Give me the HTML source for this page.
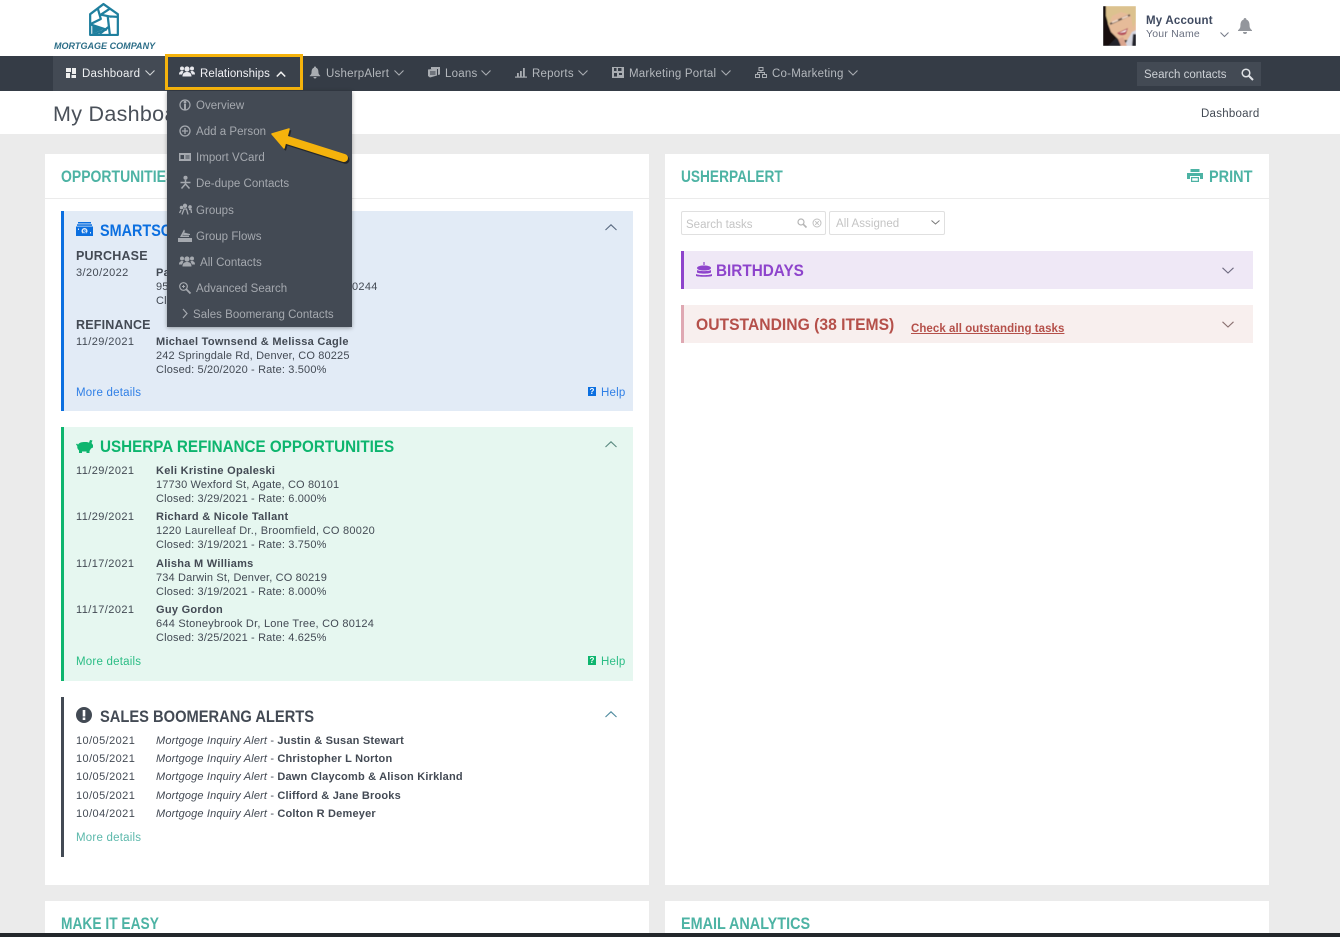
<!DOCTYPE html>
<html><head><meta charset="utf-8"><title>My Dashboard</title>
<style>
html,body{margin:0;padding:0;width:1340px;height:937px;overflow:hidden;background:#ebebeb;font-family:"Liberation Sans",sans-serif;font-size:11.5px;color:#434a54}
.a{position:absolute}
.t{position:absolute;white-space:nowrap;line-height:14px;letter-spacing:.22px}
.s{font-size:11px;letter-spacing:.15px}
.d{font-size:11px;letter-spacing:.42px}
.b,.t b{font-weight:bold;font-size:11px;letter-spacing:.28px}
.t.s b{letter-spacing:.2px}
.l{font-size:12.5px;font-weight:bold;letter-spacing:.2px}
.h{font-weight:bold;font-size:17px;line-height:20px;letter-spacing:0;transform-origin:0 50%}
.n{color:#b4b8bd;font-size:11.5px}
.m{color:#a5a9af;font-size:11.5px;letter-spacing:.03px}
svg{position:absolute;overflow:visible}
</style></head><body>
<div class="a" style="left:0;top:0;width:1340px;height:56px;background:#fff"></div>
<svg style="left:88px;top:3px" width="32" height="33" viewBox="0 0 28 31" fill="none" stroke="#1f7f9e" stroke-width="2.100" stroke-linejoin="round"><path d="M13.500 1L27 10.500V30H1V10.500Z"/><path d="M8 4.500L11 15L1 20M20 5L11 11L21 13M27 13L17.500 12.500L19.500 30M1 20L16 25L3 30M19 22L10 29"/><path d="M3 21L13 25L3 29Z" fill="#1f7f9e" stroke="none"/></svg>
<div class="t" style="left:54px;top:39px;font-size:9px;font-weight:bold;font-style:italic;color:#2b6d87;letter-spacing:.03px">MORTGAGE COMPANY</div>

<svg style="left:1103px;top:6px" width="33" height="40" viewBox="0 0 33 40"><defs><filter id="bl" x="-5%" y="-5%" width="110%" height="110%"><feGaussianBlur stdDeviation=".6"/></filter><clipPath id="ph"><rect width="33" height="40"/></clipPath></defs><g clip-path="url(#ph)"><rect width="33" height="40" fill="#fff"/><g filter="url(#bl)"><rect x="0" y="0" width="33" height="40" fill="#14110f"/><path d="M3 0H33V24L27 34H16L8 26L5 18Z" fill="#e6bb99"/><path d="M3 0H33V14L30 22L28 9L18 6L9 10L6 20L3 10Z" fill="#dcc28f"/><path d="M7 18L27 9" stroke="#5d5048" stroke-width="1.800"/><path d="M9 16.500L15 14M19 12.500L25 10" stroke="#f0d8c8" stroke-width="1.500"/><path d="M14 27L25 22L23 28Q18 31 14 27Z" fill="#b5505c"/><path d="M16 27L24 23.500L22 26Z" fill="#fff"/><path d="M5 40L13 32L20 40Z" fill="#20242c"/><path d="M21 40L29 26L33 24V40Z" fill="#d5d6e0"/><path d="M15 33L20 31L24 40H18Z" fill="#dba68f"/><path d="M30 28H33V40H29Z" fill="#20242c"/></g></g></svg>
<div class="t b" style="left:1146px;top:14px;font-size:11.500px;color:#3f4a60;letter-spacing:.2px">My Account</div>
<div class="t" style="left:1146px;top:27px;font-size:10.500px;color:#6a7080;letter-spacing:.2px">Your Name</div>
<svg style="left:1220px;top:32px" width="9" height="6" fill="none" stroke="#767b88"><path d="M.5 .5L4.500 4.500L8.500 .5"/></svg>
<svg style="left:1237px;top:18px" width="16" height="16" viewBox="0 0 16 16" fill="#93969c"><path d="M8 0a1.400 1.400 0 0 1 1.400 1.600C12 2.400 12.600 5 12.600 8c0 2 1 3 2.400 4.300V13H1v-.7C2.400 11 3.400 10 3.400 8c0-3 .6-5.600 3.200-6.400A1.400 1.400 0 0 1 8 0zM6 14h4a2 2 0 0 1-4 0z"/></svg>

<div class="a" style="left:0;top:56px;width:1340px;height:35px;background:#353c46"></div>
<div class="a" style="left:53px;top:56px;width:114px;height:35px;background:#434a54"></div>
<svg style="left:66px;top:68px" width="10" height="10" fill="#eee"><rect width="5" height="4"/><rect x="6" width="4" height="6"/><rect y="5" width="4" height="5"/><rect x="5.500" y="7" width="4.500" height="3"/></svg>
<div class="t" style="left:82px;top:67px;color:#eef0f2">Dashboard</div>
<svg style="left:145px;top:70px" width="10" height="6" fill="none" stroke="#d0d3d6" stroke-width="1.100"><path d="M.5 .5L5 5L9.500 .5"/></svg>

<div class="a" style="left:165px;top:54px;width:132px;height:30px;border:3px solid #f5b30c;background:#3a414b"></div>
<svg style="left:179px;top:66px" width="16" height="11" viewBox="0 0 16 11" fill="#e8e8ec"><circle cx="8" cy="3" r="2.600"/><circle cx="3" cy="2.500" r="2"/><circle cx="13" cy="2.500" r="2"/><path d="M3.500 10.500C3.500 7 5.500 6 8 6s4.500 1 4.500 4.500zM0 8.500C0 6 1.500 5 3 5s1.500.5 1.500.5L3 8.500zM16 8.500C16 6 14.500 5 13 5s-1.500.5-1.500.5L13 8.500z"/></svg>
<div class="t" style="left:200px;top:67px;color:#f2f2f6;letter-spacing:.07px">Relationships</div>
<svg style="left:276px;top:71px" width="10" height="7" fill="none" stroke="#f2f2f2" stroke-width="1.500"><path d="M.8 5.500L5 1.200L9.200 5.500"/></svg>

<svg style="left:309px;top:66px" width="12" height="13" viewBox="0 0 16 16" fill="#a9adb2"><path d="M8 0a1.400 1.400 0 0 1 1.400 1.600C12 2.400 12.600 5 12.600 8c0 2 1 3 2.400 4.300V13H1v-.7C2.400 11 3.400 10 3.400 8c0-3 .6-5.600 3.200-6.400A1.400 1.400 0 0 1 8 0zM6 14h4a2 2 0 0 1-4 0z"/></svg>
<div class="t n" style="left:326px;top:67px">UsherpAlert</div>
<svg style="left:394px;top:70px" width="10" height="6" fill="none" stroke="#a9adb2" stroke-width="1.100"><path d="M.5 .5L5 5L9.500 .5"/></svg>
<svg style="left:428px;top:67px" width="12" height="11" viewBox="0 0 12 11" fill="#a9adb2"><path d="M3 0H12V7.500L10 8V2H3z"/><path d="M0 2.500L9 1.500V8.500L2 10.500L0 9zM2 4.500V5.500H7.500V4.500zM2 6.500V7.500H7.500V6.500z" fill-rule="evenodd"/></svg>
<div class="t n" style="left:445px;top:67px">Loans</div>
<svg style="left:481px;top:70px" width="10" height="6" fill="none" stroke="#a9adb2" stroke-width="1.100"><path d="M.5 .5L5 5L9.500 .5"/></svg>
<svg style="left:515px;top:67px" width="12" height="11" fill="#a9adb2"><rect y="9.500" width="12" height="1.200"/><rect x="2" y="6" width="1.800" height="3.500"/><rect x="5" y="4" width="1.800" height="5.500"/><rect x="8" y="1" width="1.800" height="8.500"/></svg>
<div class="t n" style="left:532px;top:67px">Reports</div>
<svg style="left:578px;top:70px" width="10" height="6" fill="none" stroke="#a9adb2" stroke-width="1.100"><path d="M.5 .5L5 5L9.500 .5"/></svg>
<svg style="left:612px;top:67px" width="12" height="11" viewBox="0 0 12 11"><rect width="12" height="11" fill="#a9adb2"/><rect x="2" y="1" width="2.500" height="3" fill="#353c46"/><rect x="6" y="1" width="3.500" height="3" fill="#353c46"/><rect x="2" y="6" width="3" height="3.500" fill="#353c46"/><rect x="7" y="6" width="3" height="2" fill="#353c46"/></svg>
<div class="t n" style="left:629px;top:67px">Marketing Portal</div>
<svg style="left:721px;top:70px" width="10" height="6" fill="none" stroke="#a9adb2" stroke-width="1.100"><path d="M.5 .5L5 5L9.500 .5"/></svg>
<svg style="left:755px;top:67px" width="12" height="11" fill="none" stroke="#a9adb2"><rect x="4" y=".5" width="4" height="3"/><rect x=".5" y="7.500" width="4" height="3"/><rect x="7.500" y="7.500" width="4" height="3"/><path d="M6 3.500V5.500M2.500 7.500V5.500H9.500V7.500"/></svg>
<div class="t n" style="left:772px;top:67px">Co-Marketing</div>
<svg style="left:848px;top:70px" width="10" height="6" fill="none" stroke="#a9adb2" stroke-width="1.100"><path d="M.5 .5L5 5L9.500 .5"/></svg>

<div class="a" style="left:1137px;top:62px;width:124px;height:24px;background:#434a54"></div>
<div class="t" style="left:1144px;top:68px;color:#cdd1d6;letter-spacing:0">Search contacts</div>
<svg style="left:1241px;top:68px" width="13" height="13" fill="none" stroke="#dfe2e5" stroke-width="1.500"><circle cx="5" cy="5" r="3.800"/><path d="M8 8L12 12" stroke-width="2"/></svg>

<div class="a" style="left:0;top:91px;width:1340px;height:43px;background:#fff"></div>
<div class="t" style="left:53px;top:101px;font-size:21.500px;line-height:26px;color:#4a5059;letter-spacing:.3px">My Dashboard</div>
<div class="t" style="left:1201px;top:107px;color:#434a54;letter-spacing:.25px">Dashboard</div>

<!-- cards -->
<div class="a" style="left:45px;top:154px;width:604px;height:731px;background:#fff"></div>
<div class="a" style="left:665px;top:154px;width:604px;height:731px;background:#fff"></div>
<div class="a" style="left:45px;top:198px;width:604px;height:1px;background:#ebebeb"></div>
<div class="a" style="left:665px;top:198px;width:604px;height:1px;background:#ebebeb"></div>
<div class="t h" style="left:61px;top:167px;color:#4db3a4;transform:scaleX(.823)">OPPORTUNITIES</div>
<div class="t h" style="left:681px;top:167px;color:#4db3a4;transform:scaleX(.806)">USHERPALERT</div>
<svg style="left:1187px;top:169px" width="16" height="13" viewBox="0 0 16 13" fill="#4db3a4"><rect x="3.500" width="9" height="3"/><path d="M0 4H16V10H13V7H3V10H0z"/><path d="M4 8H12V13H4zM5.200 9.200V11.800H10.800V9.200z" fill-rule="evenodd"/></svg>
<div class="t h" style="left:1209px;top:167px;color:#4db3a4;transform:scaleX(.852)">PRINT</div>

<!-- blue panel -->
<div class="a" style="left:61px;top:211px;width:569px;height:200px;background:#e2ebf6;border-left:3px solid #0b6fe0"></div>
<svg style="left:76px;top:222px" width="17" height="14" viewBox="0 0 17 14" fill="#0b6fe0"><rect x="2" width="13" height="1.500"/><rect x="1" y="2.300" width="15" height="1.500"/><path d="M0 4.500H17V14H0zM2 6.500V8H3V6.500zM14 10V11.500H15V10zM8.500 6a3 3 0 1 0 .01 0z" fill-rule="evenodd"/><text x="6.700" y="12" font-size="6.500" font-weight="bold" font-family="Liberation Sans" fill="#0b6fe0">$</text></svg>
<div class="t h" style="left:100px;top:221px;color:#0b6fe0;transform:scaleX(.847)">SMARTSCAN</div>
<svg style="left:605px;top:224px" width="12" height="7" fill="none" stroke="#5a6a80" stroke-width="1.100"><path d="M.5 6L6 .8L11.500 6"/></svg>
<div class="t l" style="left:76px;top:249px">PURCHASE</div>
<div class="t d" style="left:76px;top:266px">3/20/2022</div>
<div class="t b" style="left:156px;top:266px">Pa</div>
<div class="t s" style="left:156px;top:280px">95</div>
<div class="t s" style="left:156px;top:294px">Cl</div>
<div class="t s" style="left:352px;top:280px;letter-spacing:.3px">0244</div>
<div class="t l" style="left:76px;top:318px">REFINANCE</div>
<div class="t d" style="left:76px;top:335px">11/29/2021</div>
<div class="t b" style="left:156px;top:335px">Michael Townsend &amp; Melissa Cagle</div>
<div class="t s" style="left:156px;top:349px">242 Springdale Rd, Denver, CO 80225</div>
<div class="t s" style="left:156px;top:363px">Closed: 5/20/2020 - Rate: 3.500%</div>
<div class="t" style="left:76px;top:386px;color:#2f7fe6">More details</div>
<div class="a" style="left:588px;top:387px;width:8px;height:9px;background:#0b6fe0;color:#fff;font-size:8px;font-weight:bold;line-height:9px;text-align:center">?</div>
<div class="t" style="left:601px;top:386px;color:#2f7fe6">Help</div>

<!-- green panel -->
<div class="a" style="left:61px;top:427px;width:569px;height:254px;background:#e6f7f0;border-left:3px solid #0db56e"></div>
<svg style="left:76px;top:440px" width="17" height="13" viewBox="0 0 17 13" fill="#0db56e"><path d="M14 0L16.500 .5L15.500 3L17 5V7.500L15 8.500L13.500 11V13H10.500V11.500H6V13H3V10.500C1.500 9 1 7.500 1.300 6L0 4.500L1 3.500L2 4.800C3 2.500 6 2 9 2C11 2 12 2.200 13 2.800z"/></svg>
<div class="t h" style="left:100px;top:437px;color:#0db56e;transform:scaleX(.895)">USHERPA REFINANCE OPPORTUNITIES</div>
<svg style="left:605px;top:441px" width="12" height="7" fill="none" stroke="#5a8a80" stroke-width="1.100"><path d="M.5 6L6 .8L11.500 6"/></svg>
<div class="t d" style="left:76px;top:464px">11/29/2021</div>
<div class="t b" style="left:156px;top:464px">Keli Kristine Opaleski</div>
<div class="t s" style="left:156px;top:478px">17730 Wexford St, Agate, CO 80101</div>
<div class="t s" style="left:156px;top:492px">Closed: 3/29/2021 - Rate: 6.000%</div>
<div class="t d" style="left:76px;top:510px">11/29/2021</div>
<div class="t b" style="left:156px;top:510px">Richard &amp; Nicole Tallant</div>
<div class="t s" style="left:156px;top:524px;letter-spacing:.27px">1220 Laurelleaf Dr., Broomfield, CO 80020</div>
<div class="t s" style="left:156px;top:538px">Closed: 3/19/2021 - Rate: 3.750%</div>
<div class="t d" style="left:76px;top:557px">11/17/2021</div>
<div class="t b" style="left:156px;top:557px">Alisha M Williams</div>
<div class="t s" style="left:156px;top:571px">734 Darwin St, Denver, CO 80219</div>
<div class="t s" style="left:156px;top:585px">Closed: 3/19/2021 - Rate: 8.000%</div>
<div class="t d" style="left:76px;top:603px">11/17/2021</div>
<div class="t b" style="left:156px;top:603px">Guy Gordon</div>
<div class="t s" style="left:156px;top:617px;letter-spacing:.23px">644 Stoneybrook Dr, Lone Tree, CO 80124</div>
<div class="t s" style="left:156px;top:631px">Closed: 3/25/2021 - Rate: 4.625%</div>
<div class="t" style="left:76px;top:655px;color:#2bbd85">More details</div>
<div class="a" style="left:588px;top:656px;width:8px;height:9px;background:#0db56e;color:#fff;font-size:8px;font-weight:bold;line-height:9px;text-align:center">?</div>
<div class="t" style="left:601px;top:655px;color:#2bbd85">Help</div>

<!-- boomerang -->
<div class="a" style="left:61px;top:697px;width:3px;height:160px;background:#434a54"></div>
<svg style="left:76px;top:707px" width="16" height="16"><circle cx="8" cy="8" r="8" fill="#434a54"/><rect x="6.700" y="3" width="2.600" height="6.500" fill="#fff"/><rect x="6.700" y="10.500" width="2.600" height="2.500" fill="#fff"/></svg>
<div class="t h" style="left:100px;top:707px;color:#434a54;transform:scaleX(.864)">SALES BOOMERANG ALERTS</div>
<svg style="left:605px;top:711px" width="12" height="7" fill="none" stroke="#4d8a9e" stroke-width="1.100"><path d="M.5 6L6 .8L11.500 6"/></svg>
<div class="t d" style="left:76px;top:734px">10/05/2021</div>
<div class="t s" style="left:156px;top:734px"><i>Mortgoge Inquiry Alert</i> - <b>Justin &amp; Susan Stewart</b></div>
<div class="t d" style="left:76px;top:752px">10/05/2021</div>
<div class="t s" style="left:156px;top:752px"><i>Mortgoge Inquiry Alert</i> - <b>Christopher L Norton</b></div>
<div class="t d" style="left:76px;top:770px">10/05/2021</div>
<div class="t s" style="left:156px;top:770px"><i>Mortgoge Inquiry Alert</i> - <b>Dawn Claycomb &amp; Alison Kirkland</b></div>
<div class="t d" style="left:76px;top:789px">10/05/2021</div>
<div class="t s" style="left:156px;top:789px"><i>Mortgoge Inquiry Alert</i> - <b>Clifford &amp; Jane Brooks</b></div>
<div class="t d" style="left:76px;top:807px">10/04/2021</div>
<div class="t s" style="left:156px;top:807px"><i>Mortgoge Inquiry Alert</i> - <b>Colton R Demeyer</b></div>
<div class="t" style="left:76px;top:831px;color:#5bb8ab">More details</div>

<!-- right -->
<div class="a" style="left:681px;top:211px;width:143px;height:22px;border:1px solid #e0e0e0;border-radius:2px"></div>
<div class="t" style="left:686px;top:218px;color:#c4c4c4;letter-spacing:0">Search tasks</div>
<svg style="left:797px;top:218px" width="10" height="10" fill="none" stroke="#b5b5b5" stroke-width="1.200"><circle cx="4" cy="4" r="3"/><path d="M6.300 6.300L9.500 9.500" stroke-width="1.600"/></svg>
<svg style="left:812px;top:218px" width="10" height="10" fill="none" stroke="#c0c0c0"><circle cx="5" cy="5" r="4"/><path d="M3.200 3.200L6.800 6.800M6.800 3.200L3.200 6.800"/></svg>
<div class="a" style="left:829px;top:211px;width:114px;height:22px;border:1px solid #e0e0e0;border-radius:2px"></div>
<div class="t" style="left:836px;top:217px;color:#c4c4c4;letter-spacing:.05px">All Assigned</div>
<svg style="left:931px;top:220px" width="9" height="5" fill="none" stroke="#777"><path d="M.5 .5L4.500 4L8.500 .5"/></svg>

<div class="a" style="left:681px;top:251px;width:569px;height:38px;background:#efe8f6;border-left:3px solid #8e44cc"></div>
<svg style="left:696px;top:262px" width="16" height="15" viewBox="0 0 16 15" fill="#8e44cc"><rect x="7.400" y="0" width="1.200" height="3"/><path d="M8 3.500C12 3.500 15 4.500 15 6C15 7.500 12 8.500 8 8.500S1 7.500 1 6C1 4.500 4 3.500 8 3.500z" /><path d="M1 8C3 9.500 13 9.500 15 8V10.500C13 12 3 12 1 10.500zM0 12C3 13.500 13 13.500 16 12V14C14 15 2 15 0 14z"/></svg>
<div class="t h" style="left:716px;top:261px;color:#8e44cc;transform:scaleX(.9)">BIRTHDAYS</div>
<svg style="left:1222px;top:267px" width="12" height="7" fill="none" stroke="#6e6a80" stroke-width="1.100"><path d="M.5 .8L6 6L11.500 .8"/></svg>
<div class="a" style="left:681px;top:305px;width:569px;height:38px;background:#f8efee;border-left:3px solid #dfa8b2"></div>
<div class="t h" style="left:696px;top:315px;color:#b5504a;transform:scaleX(.922)">OUTSTANDING (38 ITEMS)</div>
<div class="t b" style="left:911px;top:322px;color:#b5504a;text-decoration:underline;font-size:11.500px;letter-spacing:.05px">Check all outstanding tasks</div>
<svg style="left:1222px;top:321px" width="12" height="7" fill="none" stroke="#8a7070" stroke-width="1.100"><path d="M.5 .8L6 6L11.500 .8"/></svg>

<!-- lower cards -->
<div class="a" style="left:45px;top:901px;width:604px;height:36px;background:#fff"></div>
<div class="a" style="left:665px;top:901px;width:604px;height:36px;background:#fff"></div>
<div class="t h" style="left:61px;top:914px;color:#4db3a4;transform:scaleX(.81)">MAKE IT EASY</div>
<div class="t h" style="left:681px;top:914px;color:#4db3a4;transform:scaleX(.847)">EMAIL ANALYTICS</div>
<div class="a" style="left:0;top:933px;width:1340px;height:4px;background:#23272b"></div>

<!-- dropdown -->
<div class="a" style="left:167px;top:91px;width:185px;height:236px;background:#434a54;box-shadow:0 1px 4px rgba(0,0,0,.35)"></div>
<div class="t m" style="left:196px;top:99px">Overview</div>
<div class="t m" style="left:196px;top:125px">Add a Person</div>
<div class="t m" style="left:196px;top:151px">Import VCard</div>
<div class="t m" style="left:196px;top:177px">De-dupe Contacts</div>
<div class="t m" style="left:196px;top:204px">Groups</div>
<div class="t m" style="left:196px;top:230px">Group Flows</div>
<div class="t m" style="left:200px;top:256px">All Contacts</div>
<div class="t m" style="left:196px;top:282px">Advanced Search</div>
<div class="t m" style="left:193px;top:308px">Sales Boomerang Contacts</div>
<svg style="left:179px;top:99px" width="12" height="12" fill="none" stroke="#a5a9af" stroke-width="1.200"><circle cx="6" cy="6" r="5"/><path d="M6 5V11" stroke-width="2"/><circle cx="6" cy="3.200" r=".8" fill="#a5a9af"/></svg>
<svg style="left:179px;top:125px" width="12" height="12" fill="none" stroke="#a5a9af" stroke-width="1.300"><circle cx="6" cy="6" r="5"/><path d="M6 3V9M3 6H9"/></svg>
<svg style="left:179px;top:153px" width="12" height="9" viewBox="0 0 12 9"><path d="M0 0H12V8H0zM1.500 2V6H5V2zM6.500 2.500V3.500H10.500V2.500zM6.500 4.500V5.500H10.500V4.500z" fill="#a5a9af" fill-rule="evenodd"/></svg>
<svg style="left:180px;top:176px" width="11" height="13" fill="none" stroke="#a5a9af" stroke-width="1.500"><circle cx="5.500" cy="1.800" r="1.300" fill="#a5a9af"/><path d="M.5 6.500H10.500M5.500 4V8L1.500 12.500M5.500 8L9.500 12.500"/></svg>
<svg style="left:179px;top:204px" width="13" height="11" viewBox="0 0 13 11" fill="none" stroke="#a5a9af" stroke-width="1.300"><circle cx="6" cy="1.800" r="1.500" fill="#a5a9af"/><circle cx="11" cy="3" r="1.200" fill="#a5a9af"/><circle cx="2.500" cy="3.500" r="1.100" fill="#a5a9af"/><path d="M3 10.500L5 5H7.500L9 10.500M.5 9L2 6M10 5.500H12L12.500 9"/></svg>
<svg style="left:178px;top:229px" width="14" height="13" viewBox="0 0 14 13" fill="#a5a9af"><path d="M0 9H14V13H0zM2 8L6 0.500L7 2L4.500 6.500H11V8z"/><path d="M6 3.500L12 5V6H5z"/></svg>
<svg style="left:179px;top:256px" width="16" height="11" viewBox="0 0 16 11" fill="#a5a9af"><circle cx="8" cy="3" r="2.600"/><circle cx="3" cy="2.500" r="2"/><circle cx="13" cy="2.500" r="2"/><path d="M3.500 10.500C3.500 7 5.500 6 8 6s4.500 1 4.500 4.500zM0 8.500C0 6 1.500 5 3 5s1.500.5 1.500.5L3 8.500zM16 8.500C16 6 14.500 5 13 5s-1.500.5-1.500.5L13 8.500z"/></svg>
<svg style="left:179px;top:282px" width="12" height="12" fill="none" stroke="#a5a9af" stroke-width="1.200"><circle cx="4.500" cy="4.500" r="3.800"/><path d="M7.300 7.300L11.500 11.500" stroke-width="1.800"/><path d="M3 4.500H6M4.500 3V6" stroke-width="1"/></svg>
<svg style="left:182px;top:308px" width="6" height="11" fill="none" stroke="#a5a9af" stroke-width="1.200"><path d="M1 1L5 5.500L1 10"/></svg>

<!-- arrow -->
<svg style="left:0;top:0" width="1340" height="937"><g transform="translate(1.500 1.800)" fill="#111" stroke="#111" opacity=".6"><path d="M272 134L289 129L284 148Z" stroke-width="1.500" stroke-linejoin="round"/><path d="M284 139L344 158" stroke-width="8" stroke-linecap="round" fill="none"/></g><g fill="#f5b30c" stroke="#f5b30c"><path d="M272 134L289 129L284 148Z" stroke-width="1.500" stroke-linejoin="round"/><path d="M284 139L344 158" stroke-width="8" stroke-linecap="round" fill="none"/></g></svg>
</body></html>
